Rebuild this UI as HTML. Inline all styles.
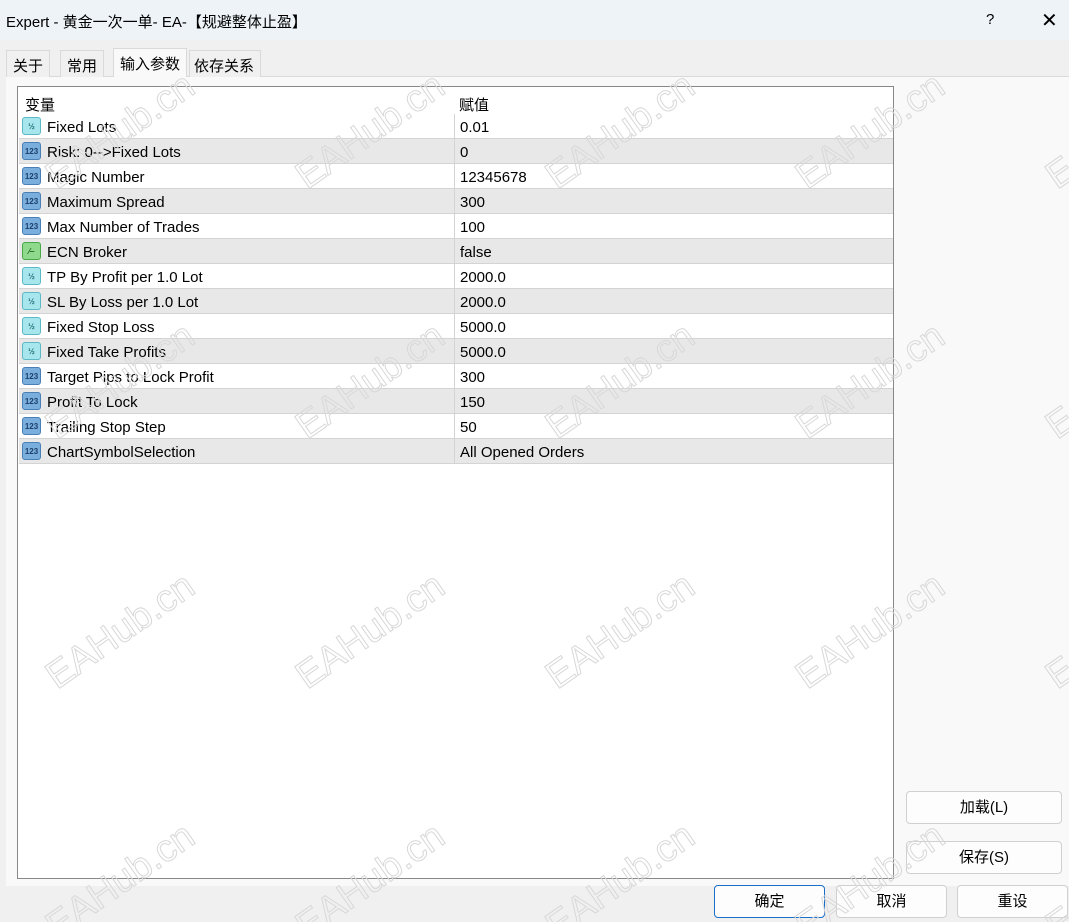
<!DOCTYPE html>
<html style="width:1069px;height:922px;overflow:hidden"><head><meta charset="utf-8"><style>
*{margin:0;padding:0;box-sizing:border-box}
body{width:1069px;height:922px;background:#f0f0f0;font-family:"Liberation Sans","Noto Sans CJK SC",sans-serif;font-size:15px;color:#000;position:relative;overflow:hidden}
.title{position:absolute;left:0;top:0;width:1069px;height:40px;background:#eef3f8;}
.title span{position:absolute;left:6px;top:10px;font-size:15px}
.tab{position:absolute;top:50px;height:27px;border:1px solid #d9d9d9;border-bottom:none;padding:4px 6px;font-size:15px;background:#f0f0f0}
.panel{position:absolute;left:6px;top:76px;width:1063px;height:810px;border-top:1px solid #d9d9d9;background:#f9f9f9}
.tbl{position:absolute;left:17px;top:86px;width:877px;height:793px;background:#fff;border:1px solid #888}
.row{position:absolute;left:1px;width:874px;height:25px;border-bottom:1px solid #d4d4d4}
.row.g{background:#e8e8e8}
.row .n{position:absolute;left:28px;top:5px}
.row .v{position:absolute;left:441px;top:5px}
.row .sep{position:absolute;left:435px;top:0;width:1px;height:25px;background:#d4d4d4}
.ic{position:absolute;left:3px;top:3px;width:19px;height:18px;border-radius:3px;font-size:8px;font-weight:bold;text-align:center;line-height:18px}
.b{background:#7aaedc;border:1px solid #4a7fb5;color:#1d3f6b}
.h{background:#a6e6ec;border:1px solid #5bb8c4;color:#226c78}
.k{background:#8fd98c;border:1px solid #47a946;color:#1d5d1c}
.btn{position:absolute;background:#fdfdfd;border:1px solid #d0d0d0;border-radius:4px;text-align:center;line-height:32px;font-size:15px}
.wm{position:absolute;font-size:38px;color:transparent;-webkit-text-stroke:1px #d8d8d8;transform:rotate(-35deg);white-space:nowrap}
</style></head><body>
<div class="title"><span style="top:11px">Expert - 黄金一次一单- EA-【规避整体止盈】</span><span style="left:986px;top:11px">?</span><span style="left:1041px;font-size:20px;top:8px">✕</span></div>
<div class="panel"></div>
<div class="tab" style="left:6px">关于</div>
<div class="tab" style="left:60px">常用</div>
<div class="tab" style="left:113px;top:48px;height:29px;background:#f9f9f9;z-index:2">输入参数</div>
<div class="tab" style="left:189px;padding-left:4px">依存关系</div>
<div class="tbl">
<div style="position:absolute;left:7px;top:7px">变量</div>
<div style="position:absolute;left:441px;top:7px">赋值</div>
<div class="row" style="top:27px"><div class="ic h">½</div><div class="n">Fixed Lots</div><div class="sep"></div><div class="v">0.01</div></div>
<div class="row g" style="top:52px"><div class="ic b">123</div><div class="n">Risk: 0-->Fixed Lots</div><div class="sep"></div><div class="v">0</div></div>
<div class="row" style="top:77px"><div class="ic b">123</div><div class="n">Magic Number</div><div class="sep"></div><div class="v">12345678</div></div>
<div class="row g" style="top:102px"><div class="ic b">123</div><div class="n">Maximum Spread</div><div class="sep"></div><div class="v">300</div></div>
<div class="row" style="top:127px"><div class="ic b">123</div><div class="n">Max Number of Trades</div><div class="sep"></div><div class="v">100</div></div>
<div class="row g" style="top:152px"><div class="ic k">⁄‒</div><div class="n">ECN Broker</div><div class="sep"></div><div class="v">false</div></div>
<div class="row" style="top:177px"><div class="ic h">½</div><div class="n">TP By Profit per 1.0 Lot</div><div class="sep"></div><div class="v">2000.0</div></div>
<div class="row g" style="top:202px"><div class="ic h">½</div><div class="n">SL By Loss per 1.0 Lot</div><div class="sep"></div><div class="v">2000.0</div></div>
<div class="row" style="top:227px"><div class="ic h">½</div><div class="n">Fixed Stop Loss</div><div class="sep"></div><div class="v">5000.0</div></div>
<div class="row g" style="top:252px"><div class="ic h">½</div><div class="n">Fixed Take Profits</div><div class="sep"></div><div class="v">5000.0</div></div>
<div class="row" style="top:277px"><div class="ic b">123</div><div class="n">Target Pips to Lock Profit</div><div class="sep"></div><div class="v">300</div></div>
<div class="row g" style="top:302px"><div class="ic b">123</div><div class="n">Profit To Lock</div><div class="sep"></div><div class="v">150</div></div>
<div class="row" style="top:327px"><div class="ic b">123</div><div class="n">Trailing Stop Step</div><div class="sep"></div><div class="v">50</div></div>
<div class="row g" style="top:352px"><div class="ic b">123</div><div class="n">ChartSymbolSelection</div><div class="sep"></div><div class="v">All Opened Orders</div></div>
</div>
<div class="btn" style="left:906px;top:791px;width:156px;height:33px">加载(L)</div>
<div class="btn" style="left:906px;top:841px;width:156px;height:33px">保存(S)</div>
<div class="btn" style="left:714px;top:885px;width:111px;height:33px;border:1px solid #1a6fc9">确定</div>
<div class="btn" style="left:836px;top:885px;width:111px;height:33px">取消</div>
<div class="btn" style="left:957px;top:885px;width:111px;height:33px">重设</div>
<div class="wm" style="left:35px;top:110px">EAHub.cn</div>
<div class="wm" style="left:285px;top:110px">EAHub.cn</div>
<div class="wm" style="left:535px;top:110px">EAHub.cn</div>
<div class="wm" style="left:785px;top:110px">EAHub.cn</div>
<div class="wm" style="left:1035px;top:110px">EAHub.cn</div>
<div class="wm" style="left:35px;top:360px">EAHub.cn</div>
<div class="wm" style="left:285px;top:360px">EAHub.cn</div>
<div class="wm" style="left:535px;top:360px">EAHub.cn</div>
<div class="wm" style="left:785px;top:360px">EAHub.cn</div>
<div class="wm" style="left:1035px;top:360px">EAHub.cn</div>
<div class="wm" style="left:35px;top:610px">EAHub.cn</div>
<div class="wm" style="left:285px;top:610px">EAHub.cn</div>
<div class="wm" style="left:535px;top:610px">EAHub.cn</div>
<div class="wm" style="left:785px;top:610px">EAHub.cn</div>
<div class="wm" style="left:1035px;top:610px">EAHub.cn</div>
<div class="wm" style="left:35px;top:860px">EAHub.cn</div>
<div class="wm" style="left:285px;top:860px">EAHub.cn</div>
<div class="wm" style="left:535px;top:860px">EAHub.cn</div>
<div class="wm" style="left:785px;top:860px">EAHub.cn</div>
<div class="wm" style="left:1035px;top:860px">EAHub.cn</div>
</body></html>
